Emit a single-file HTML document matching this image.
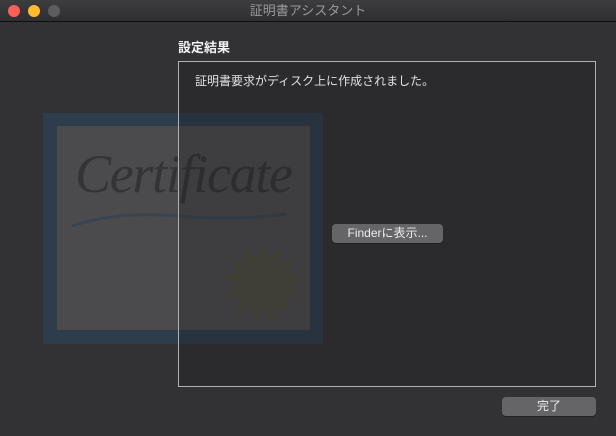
<!DOCTYPE html>
<html><head><meta charset="utf-8"><style>
*{margin:0;padding:0;box-sizing:border-box}
body{width:616px;height:436px;background:#323234;overflow:hidden;position:relative;font-family:"Liberation Sans","Noto Sans CJK JP",sans-serif;color:#e6e6e6}
.tb{position:absolute;left:0;top:0;width:616px;height:22px;background:linear-gradient(#3d3d3f,#2f2f31);border-bottom:1px solid #101010;text-align:center;font-size:13px;line-height:21px;color:#9a9a9a}
.dot{position:absolute;top:5px;width:12px;height:12px;border-radius:50%}
.a{position:absolute}
.btn{position:absolute;background:#656567;border-radius:4px;font-size:12px;color:#ececec;text-align:center;line-height:19px;box-shadow:0 1px 0 rgba(0,0,0,.3)}
</style></head><body>
<div class="tb">証明書アシスタント
<div class="dot" style="left:8px;background:#fe5f57"></div>
<div class="dot" style="left:28px;background:#febc2e"></div>
<div class="dot" style="left:48px;background:#5d5d5f"></div>
</div>
<div class="a" style="left:43px;top:113px;width:280px;height:231px;background:#2e3d4b"></div>
<div class="a" style="left:57px;top:126px;width:253px;height:204px;background:#4b4b4d"></div>
<svg class="a" style="left:57px;top:126px" width="253" height="204">
<text x="18" y="66" font-family="Liberation Serif,serif" font-style="italic" font-size="54" fill="#343436" textLength="218">Certificate</text>
<path d="M15 100 Q60 85 120 90 T230 88" stroke="#3a4450" stroke-width="3" fill="none"/>
<polygon fill="#4d4c40" points="206,118 212,132 223,122 224,137 238,133 232,146 246,150 234,159 243,171 229,172 232,187 219,181 215,196 206,185 197,196 193,181 180,187 183,172 169,171 178,159 166,150 180,146 174,133 188,137 189,122 200,132"/>
</svg>
<div class="a" style="left:178px;top:61px;width:418px;height:326px;border:1px solid #b0b0b0;background:rgba(24,24,26,.25)"></div>
<div class="a" style="left:178px;top:37px;font-size:13px;font-weight:bold;color:#f2f2f2">設定結果</div>
<div class="a" style="left:195px;top:72px;font-size:12px;color:#e0e0e0">証明書要求がディスク上に作成されました。</div>
<div class="btn" style="left:332px;top:224px;width:111px;height:19px">Finderに表示...</div>
<div class="btn" style="left:502px;top:397px;width:94px;height:19px">完了</div>
</body></html>
